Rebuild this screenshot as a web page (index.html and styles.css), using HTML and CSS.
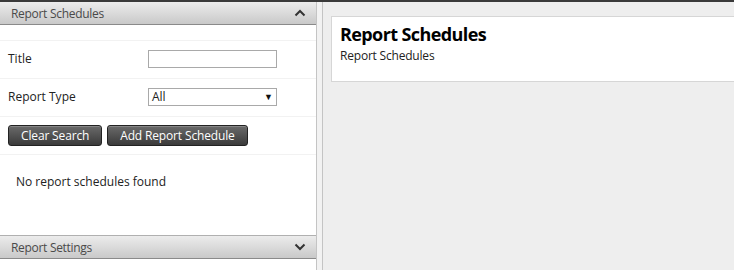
FILE: index.html
```html
<!DOCTYPE html>
<html>
<head>
  <title>Report Schedules</title>
  <link rel="stylesheet" href="styles.css">
</head>
<body>
  <div class="app">
    <div class="sidebar">
      <div class="panel-header">
        <span>Report Schedules</span>
        <svg class="chevron" width="12" height="8" viewBox="0 0 12 8"><polyline points="1.5,6.5 6,2 10.5,6.5" fill="none" stroke="#333" stroke-width="2"/></svg>
      </div>
      <div class="panel-body">
        <div class="spacer"></div>
        <div class="form-row">
          <label>Title</label>
          <input type="text" class="field">
        </div>
        <div class="form-row">
          <label>Report Type</label>
          <div class="field select"><span>All</span><span class="arrow">&#9660;</span></div>
        </div>
        <div class="form-row buttons">
          <button class="btn">Clear Search</button>
          <button class="btn">Add Report Schedule</button>
        </div>
        <div class="empty">No report schedules found</div>
      </div>
      <div class="panel-header closed">
        <span>Report Settings</span>
        <svg class="chevron" width="12" height="8" viewBox="0 0 12 8"><polyline points="1.5,1.5 6,6 10.5,1.5" fill="none" stroke="#333" stroke-width="2"/></svg>
      </div>
      <div class="panel-foot"></div>
    </div>
    <div class="splitter"></div>
    <div class="main">
      <div class="card">
        <h1>Report Schedules</h1>
        <p>Report Schedules</p>
      </div>
    </div>
  </div>
</body>
</html>
```

FILE: styles.css
```css
html, body {
  margin: 0;
  padding: 0;
  height: 100%;
}

body {
  font-family: "Open Sans", "Noto Sans", sans-serif;
  font-size: 12px;
  color: #222;
  background: #eeeeee;
  overflow: hidden;
}

.app {
  display: flex;
  height: 270px;
  border-top: 2px solid #3a3a3a;
  box-sizing: border-box;
}

.sidebar {
  width: 316px;
  display: flex;
  flex-direction: column;
  background: #fff;
}

.panel-header {
  height: 22px;
  display: flex;
  align-items: center;
  justify-content: space-between;
  padding: 0 10px 0 11px;
  background: linear-gradient(#ececec, #c9c9c9);
  border-bottom: 1px solid #8a8a8a;
  color: #4a4a4a;
  font-size: 12px;
  letter-spacing: -0.3px;
}

.panel-header.closed {
  border-top: 1px solid #b0b0b0;
}

.chevron {
  display: block;
}

.panel-body {
  flex: 1;
}

.spacer {
  height: 15px;
  border-bottom: 1px solid #f2f2f2;
}

.form-row {
  display: flex;
  align-items: center;
  border-bottom: 1px solid #f2f2f2;
  padding-left: 8px;
  padding-bottom: 2px;
  box-sizing: border-box;
  height: 38px;
}

.form-row label {
  width: 140px;
}

.field {
  width: 129px;
  height: 18px;
  box-sizing: border-box;
  border: 1px solid #a9a9a9;
  margin: 0;
  padding: 0 4px;
  font: inherit;
}

.select {
  display: flex;
  align-items: center;
  justify-content: space-between;
  padding: 0 3px 0 3px;
}

.select .arrow {
  font-size: 9px;
  color: #111;
}

.buttons {
  gap: 5px;
  padding-bottom: 0;
}

.btn {
  height: 21px;
  padding: 0 12px;
  font: inherit;
  font-size: 12px;
  color: #fff;
  background: linear-gradient(#6a6a6a, #3a3a3a);
  border: 1px solid #222;
  border-radius: 3px;
  box-shadow: inset 0 1px 0 rgba(255, 255, 255, 0.2);
  cursor: pointer;
  letter-spacing: -0.15px;
}

.empty {
  padding: 18px 0 0 16px;
}

.panel-foot {
  height: 11px;
}

.splitter {
  width: 5px;
  background: #f2f2f2;
  border-left: 1px solid #c4c4c4;
  border-right: 1px solid #c4c4c4;
}

.main {
  flex: 1;
  padding: 14px 0 0 8px;
}

.card {
  background: #fff;
  border: 1px solid #d6d6d6;
  border-right: none;
  padding: 6px 8px;
  box-sizing: border-box;
  height: 66px;
}

.card h1 {
  margin: 0;
  font-size: 18px;
  font-weight: bold;
  line-height: 22px;
  color: #000;
  letter-spacing: -0.6px;
}

.card p {
  margin: 2px 0 0;
  font-size: 12px;
  color: #222;
  letter-spacing: -0.2px;
}
```
